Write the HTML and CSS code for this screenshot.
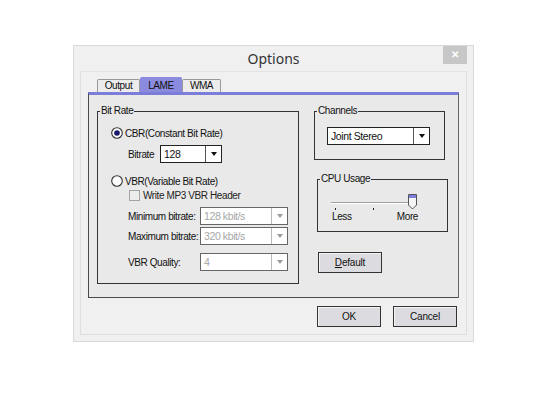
FILE: index.html
```html
<!DOCTYPE html>
<html lang="en">
   <head>
      <meta charset="UTF-8" />
      <title>Options</title>
      <link rel="stylesheet" href="styles.css">
   </head>
   <body>
      <div class="window">
         <div class="titlebar">
            <span></span>
            <div class="title">Options</div>
            <div class="close">&#x2715;</div>
         </div>

         <div class="client">
            <div class="tabs">
               <div class="tab output">Output</div>
               <div class="tab lame active">LAME</div>
               <div class="tab wma">WMA</div>
            </div>

            <div class="panel">
               <!-- left: bit rate -->
               <div class="group bitrate">
                  <div class="group-title">Bit Rate</div>

                  <div class="row radio-row cbr">
                     <svg class="radio" width="12" height="12" viewBox="0 0 12 12">
                        <circle cx="6" cy="6" r="5.3" fill="#fff" stroke="#333" stroke-width="1.1" />
                        <circle cx="6" cy="6" r="2.8" fill="#16166a" />
                     </svg>
                     <span>CBR(Constant Bit Rate)</span>
                  </div>

                  <div class="row field bitrate-field">
                     <label class="lbl short">Bitrate</label>
                     <div class="combo small">
                        <div class="combo-text">128</div>
                        <div class="combo-btn"><i class="arrow"></i></div>
                     </div>
                  </div>

                  <div class="row radio-row vbr">
                     <svg class="radio" width="12" height="12" viewBox="0 0 12 12">
                        <circle cx="6" cy="6" r="5.3" fill="#fff" stroke="#333" stroke-width="1.1" />
                     </svg>
                     <span>VBR(Variable Bit Rate)</span>
                  </div>

                  <div class="row check-row">
                     <span class="checkbox"></span>
                     <span class="muted-text">Write MP3 VBR Header</span>
                  </div>

                  <div class="row field min-row">
                     <label class="lbl">Minimum bitrate:</label>
                     <div class="combo disabled">
                        <div class="combo-text">128 kbit/s</div>
                        <div class="combo-btn"><i class="arrow"></i></div>
                     </div>
                  </div>

                  <div class="row field max-row">
                     <label class="lbl">Maximum bitrate:</label>
                     <div class="combo disabled">
                        <div class="combo-text">320 kbit/s</div>
                        <div class="combo-btn"><i class="arrow"></i></div>
                     </div>
                  </div>

                  <div class="row field quality-row">
                     <label class="lbl">VBR Quality:</label>
                     <div class="combo disabled">
                        <div class="combo-text">4</div>
                        <div class="combo-btn"><i class="arrow"></i></div>
                     </div>
                  </div>
               </div>

               <!-- right column -->
               <div class="side">
                  <div class="group channels">
                     <div class="group-title">Channels</div>
                     <div class="combo wide">
                        <div class="combo-text">Joint Stereo</div>
                        <div class="combo-btn"><i class="arrow"></i></div>
                     </div>
                  </div>

                  <div class="group cpu">
                     <div class="group-title">CPU Usage</div>
                     <svg class="slider" width="90" height="18" viewBox="0 0 90 18">
                        <line x1="1" y1="9.5" x2="82" y2="9.5" stroke="#a0a0a0" stroke-width="1" />
                        <line x1="1" y1="10.5" x2="82" y2="10.5" stroke="#fff" stroke-width="1" />
                        <line x1="5.5" y1="15" x2="5.5" y2="17" stroke="#222" />
                        <line x1="43.5" y1="15" x2="43.5" y2="17" stroke="#222" />
                        <path d="M78.5 1.5 H86.5 V12 L82.5 16 L78.5 12 Z" fill="#f4f4f4" stroke="#555" />
                        <rect x="79" y="2" width="7" height="3" fill="#7e7edc" />
                     </svg>
                     <div class="slider-labels">
                        <span>Less</span>
                        <span>More</span>
                     </div>
                  </div>

                  <button class="btn default-btn" type="button"><u>D</u>efault</button>
               </div>
            </div>

            <div class="footer">
               <button class="btn" type="button">OK</button>
               <button class="btn" type="button">Cancel</button>
            </div>
         </div>
      </div>
   </body>
</html>
```

FILE: styles.css
```css
* {
   box-sizing: border-box;
}

body {
   margin: 0;
   background-color: #fff;
   font-family: 'Liberation Sans', Arial, sans-serif;
   font-size: 10px;
   letter-spacing: -0.4px;
   color: #111;
}

.window {
   width: 401px;
   height: 297px;
   margin: 45px 0 0 73px;
   background: #f0f0f0;
   border: 1px solid #d9d9d9;
}

.titlebar {
   display: grid;
   grid-template-columns: 1fr auto 1fr;
   align-items: start;
   height: 25px;
}

.title {
   font-family: 'Noto Sans', sans-serif;
   font-size: 14px;
   letter-spacing: 0;
   color: #333;
   padding-top: 3px;
}

.close {
   justify-self: end;
   width: 24px;
   height: 18px;
   margin-right: 6px;
   background: #c7c7c7;
   color: #fff;
   font-size: 10px;
   font-weight: bold;
   letter-spacing: 0;
   text-align: center;
   line-height: 18px;
}

.client {
   margin: 0 6px;
   padding: 5px 7px 7px 7px;
   border: 1px solid #dedede;
   border-top-color: #e2e2e2;
}

/* tabs */
.tabs {
   display: flex;
   align-items: flex-end;
   height: 15px;
   margin-left: 9px;
}

.tab {
   height: 13px;
   line-height: 12px;
   text-align: center;
   background: #ececec;
   border: 1px solid #9a9a9a;
   border-bottom: none;
   border-radius: 2px 2px 0 0;
   color: #111;
}

.tab.output {
   width: 43px;
}

.tab.lame {
   width: 42px;
}

.tab.wma {
   width: 39px;
}

.tab.active {
   height: 15px;
   padding-top: 2px;
   background: #8a8ade;
   border-color: #8a8ade;
}

.panel {
   display: flex;
   align-items: flex-start;
   background: #e9e9e9;
   border: 1px solid #4a4a4a;
   border-top: 3px solid #7c7cd9;
   border-right-color: #666;
   padding: 16px 0 13px 8px;
}

/* group boxes */
.group {
   border: 1px solid #333;
   background: #e9e9e9;
}

.group-title {
   width: fit-content;
   margin: -7px 0 0 2px;
   padding: 0 1px;
   line-height: 12px;
   background: #e9e9e9;
}

.bitrate {
   width: 202px;
   padding: 0 0 12px 13px;
}

.bitrate .group-title {
   margin-left: -11px;
}

.row {
   display: flex;
   align-items: center;
}

.radio-row {
   height: 12px;
   gap: 2px;
}

.cbr {
   margin-top: 10px;
}

.vbr {
   margin-top: 12px;
}

.field {
   height: 18px;
   padding-left: 17px;
}

.bitrate-field {
   margin-top: 6px;
}

.check-row {
   height: 12px;
   margin-top: 2px;
   padding-left: 18px;
   gap: 3px;
}

.checkbox {
   width: 11px;
   height: 11px;
   background: #ececec;
   border: 1px solid #a3a3a3;
}

.muted-text {
   color: #222;
}

.min-row {
   margin-top: 6px;
}

.max-row {
   margin-top: 2px;
}

.quality-row {
   margin-top: 8px;
}

.lbl {
   width: 72px;
   flex-shrink: 0;
}

.lbl.short {
   width: 32px;
}

/* combo boxes */
.combo {
   display: flex;
   width: 88px;
   height: 18px;
   background: #fff;
   border: 1px solid #222;
}

.combo.small {
   width: 62px;
}

.combo.wide {
   width: 103px;
   margin: 10px 0 0 12px;
}

.combo-text {
   flex: 1;
   padding-left: 3px;
   line-height: 16px;
   font-size: 10.5px;
}

.combo-btn {
   display: flex;
   align-items: center;
   justify-content: center;
   width: 16px;
   border-left: 1px solid #555;
}

.arrow {
   width: 0;
   height: 0;
   border-left: 3.5px solid transparent;
   border-right: 3.5px solid transparent;
   border-top: 4px solid #111;
}

.combo.disabled {
   border-color: #666;
}

.combo.disabled .combo-text {
   color: #a6a6a6;
}

.combo.disabled .combo-btn {
   border-left-color: #bbb;
}

.combo.disabled .arrow {
   border-top-color: #9c9c9c;
}

/* right column */
.side {
   display: flex;
   flex-direction: column;
   align-items: flex-start;
   margin-left: 15px;
}

.channels {
   width: 131px;
   padding-bottom: 14px;
}

.cpu {
   width: 131px;
   margin: 19px 0 0 3px;
   padding: 0 0 8px 12px;
}

.cpu .group-title {
   margin-left: -10px;
}

.slider {
   display: block;
   margin-top: 8px;
}

.slider-labels {
   display: flex;
   justify-content: space-between;
   width: 86px;
   margin-left: 2px;
   line-height: 12px;
}

.btn {
   width: 64px;
   height: 21px;
   padding: 0;
   font-family: inherit;
   font-size: 10px;
   letter-spacing: -0.2px;
   color: #111;
   background: #dcdce0;
   border: 1px solid #333;
   box-shadow: inset 1px 1px 0 #f4f4f4;
}

.default-btn {
   margin: 20px 0 0 4px;
}

.footer {
   display: flex;
   justify-content: flex-end;
   gap: 12px;
   padding: 8px 2px 0 0;
}
```
